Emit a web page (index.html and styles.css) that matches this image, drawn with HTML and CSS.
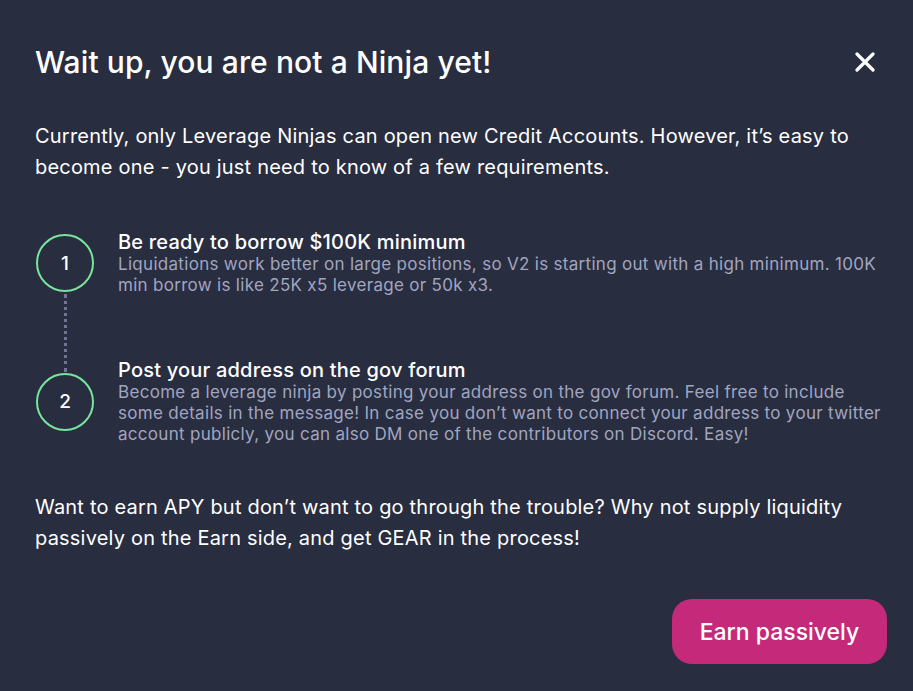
FILE: index.html
```html
<!DOCTYPE html>
<html lang="en">
<head>
<meta charset="utf-8">
<link rel="stylesheet" href="styles.css">
</head>
<body>
<div class="modal">
  <div class="header">
    <h1 class="title">Wait up, you are not a Ninja yet!</h1>
    <button class="close" aria-label="Close">
      <svg width="20" height="20" viewBox="0 0 20 20"><path d="M2 2 L18 18 M18 2 L2 18" stroke="#fff" stroke-width="3.2" stroke-linecap="round"/></svg>
    </button>
  </div>
  <p class="lead">Currently, only Leverage Ninjas can open new Credit Accounts. However, it’s easy to become one - you just need to know of a few requirements.</p>
  <div class="steps">
    <div class="step first">
      <div class="num">1</div>
      <div class="body">
        <div class="step-title">Be ready to borrow $100K minimum</div>
        <div class="step-desc">Liquidations work better on large positions, so V2 is starting out with a high minimum. 100K min borrow is like 25K x5 leverage or 50k x3.</div>
      </div>
    </div>
    <div class="step">
      <div class="num">2</div>
      <div class="body">
        <div class="step-title">Post your address on the gov forum</div>
        <div class="step-desc">Become a leverage ninja by posting your address on the gov forum. Feel free to include some details in the message! In case you don’t want to connect your address to your twitter account publicly, you can also DM one of the contributors on Discord. Easy!</div>
      </div>
    </div>
  </div>
  <p class="lead bottom">Want to earn APY but don’t want to go through the trouble? Why not supply liquidity passively on the Earn side, and get GEAR in the process!</p>
  <div class="actions">
    <button class="earn">Earn passively</button>
  </div>
</div>
</body>
</html>
```
FILE: styles.css
```css
html, body {
  margin: 0;
  padding: 0;
  background: #282d3f;
}
body {
  font-family: Inter, "Noto Sans", sans-serif;
  color: #ffffff;
  width: 913px;
  height: 691px;
  overflow: hidden;
}
.modal {
  padding: 45px 26px 0 35px;
}
.header {
  display: flex;
  align-items: center;
  justify-content: space-between;
  height: 34px;
}
.title {
  margin: 0;
  font-size: 30px;
  font-weight: 500;
  line-height: 34px;
  letter-spacing: 0.1px;
}
.close {
  background: none;
  border: 0;
  padding: 0;
  width: 20px;
  height: 20px;
  margin-right: 12px;
  display: flex;
}
.lead {
  margin: 42px 0 0 0;
  font-size: 20px;
  line-height: 31px;
  font-weight: 400;
  letter-spacing: 0.2px;
  color: #ffffff;
}
.steps {
  margin-top: 47px;
  display: flex;
  flex-direction: column;
  gap: 62px;
}
.step {
  display: flex;
  align-items: center;
  gap: 24px;
}
.num {
  position: relative;
  flex: none;
  width: 54px;
  height: 54px;
  margin-left: 1px;
  border: 2px solid #78e49c;
  border-radius: 50%;
  display: flex;
  align-items: center;
  justify-content: center;
  font-size: 19px;
  font-weight: 500;
}
.first .num::after {
  content: "";
  position: absolute;
  left: 26px;
  top: 58px;
  height: 78px;
  border-left: 3px dotted #6f7693;
}
.body {
  flex: 1;
}
.step-title {
  font-size: 20px;
  line-height: 24px;
  font-weight: 500;
  letter-spacing: 0.2px;
}
.step-desc {
  font-size: 17px;
  line-height: 21px;
  letter-spacing: 0.3px;
  color: #a1a5c0;
}
.lead.bottom {
  margin-top: 47px;
}
.actions {
  display: flex;
  justify-content: flex-end;
  margin-top: 45px;
}
.earn {
  width: 215px;
  height: 65px;
  border: 0;
  border-radius: 20px;
  background: #c4297a;
  color: #ffffff;
  font-family: Inter, "Noto Sans", sans-serif;
  font-size: 23px;
  font-weight: 500;
}
```
